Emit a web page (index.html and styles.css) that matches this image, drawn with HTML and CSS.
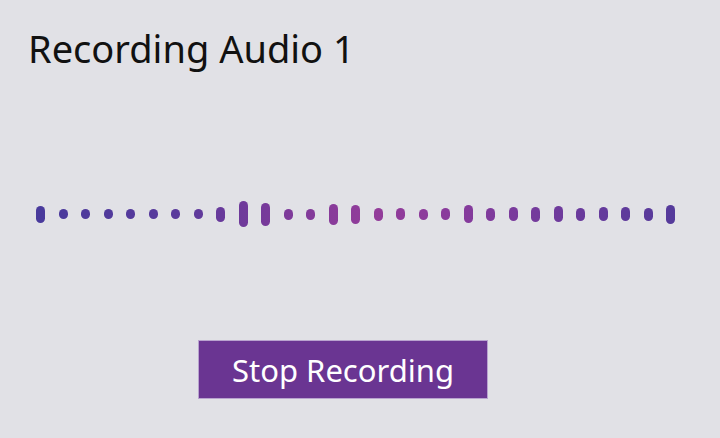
FILE: index.html
```html
<!DOCTYPE html>
<html lang="en">
<head>
  <meta charset="UTF-8" />
  <meta name="viewport" content="width=device-width, initial-scale=1.0" />
  <title>Recording Audio 1</title>
  <link rel="stylesheet" href="styles.css">
</head>
<body>
  <main class="recorder">
    <h1 class="title">Recording Audio 1</h1>

    <div class="wave" aria-label="Audio level">
      <span class="bar" style="height: 17px"></span>
      <span class="bar" style="height: 10px"></span>
      <span class="bar" style="height: 10px"></span>
      <span class="bar" style="height: 10px"></span>
      <span class="bar" style="height: 10px"></span>
      <span class="bar" style="height: 10px"></span>
      <span class="bar" style="height: 10px"></span>
      <span class="bar" style="height: 10px"></span>
      <span class="bar" style="height: 15px"></span>
      <span class="bar" style="height: 26px"></span>
      <span class="bar" style="height: 23px"></span>
      <span class="bar" style="height: 11px"></span>
      <span class="bar" style="height: 11px"></span>
      <span class="bar" style="height: 21px"></span>
      <span class="bar" style="height: 19px"></span>
      <span class="bar" style="height: 13px"></span>
      <span class="bar" style="height: 12px"></span>
      <span class="bar" style="height: 11px"></span>
      <span class="bar" style="height: 12px"></span>
      <span class="bar" style="height: 18px"></span>
      <span class="bar" style="height: 13px"></span>
      <span class="bar" style="height: 14px"></span>
      <span class="bar" style="height: 15px"></span>
      <span class="bar" style="height: 16px"></span>
      <span class="bar" style="height: 13px"></span>
      <span class="bar" style="height: 14px"></span>
      <span class="bar" style="height: 14px"></span>
      <span class="bar" style="height: 13px"></span>
      <span class="bar" style="height: 19px"></span>
    </div>

    <button class="stop-btn">Stop Recording</button>
  </main>
</body>
</html>
```

FILE: styles.css
```css
body {
  margin: 0;
  background-color: #e1e1e6;
  font-family: 'Noto Sans', 'Open Sans', sans-serif;
  color: #111;
}

.recorder {
  height: 438px;
  padding-top: 1px;
  box-sizing: border-box;
}

.title {
  margin: 23px 0 0 28px;
  font-size: 38px;
  font-weight: 400;
  line-height: 48px;
}

/* waveform row, all bars share one gradient */
.wave {
  display: flex;
  align-items: center;
  gap: 13.5px;
  height: 40px;
  margin-top: 122px;
  padding-left: 36px;
}

.bar {
  width: 9px;
  border-radius: 5px;
  background: linear-gradient(90deg, #443a9c 0%, #5a3a9c 25%, #7a3a9a 38%, #933c9a 52%, #8a3b9c 62%, #6a3a9c 80%, #4a3a9a 100%) fixed;
}

.stop-btn {
  display: block;
  margin: 106px 0 0 198px;
  width: 290px;
  height: 59px;
  padding: 0;
  border: 1px solid #b9a3cf;
  background-color: #6a3592;
  color: #fff;
  font-family: inherit;
  font-size: 31px;
  cursor: pointer;
}
```
